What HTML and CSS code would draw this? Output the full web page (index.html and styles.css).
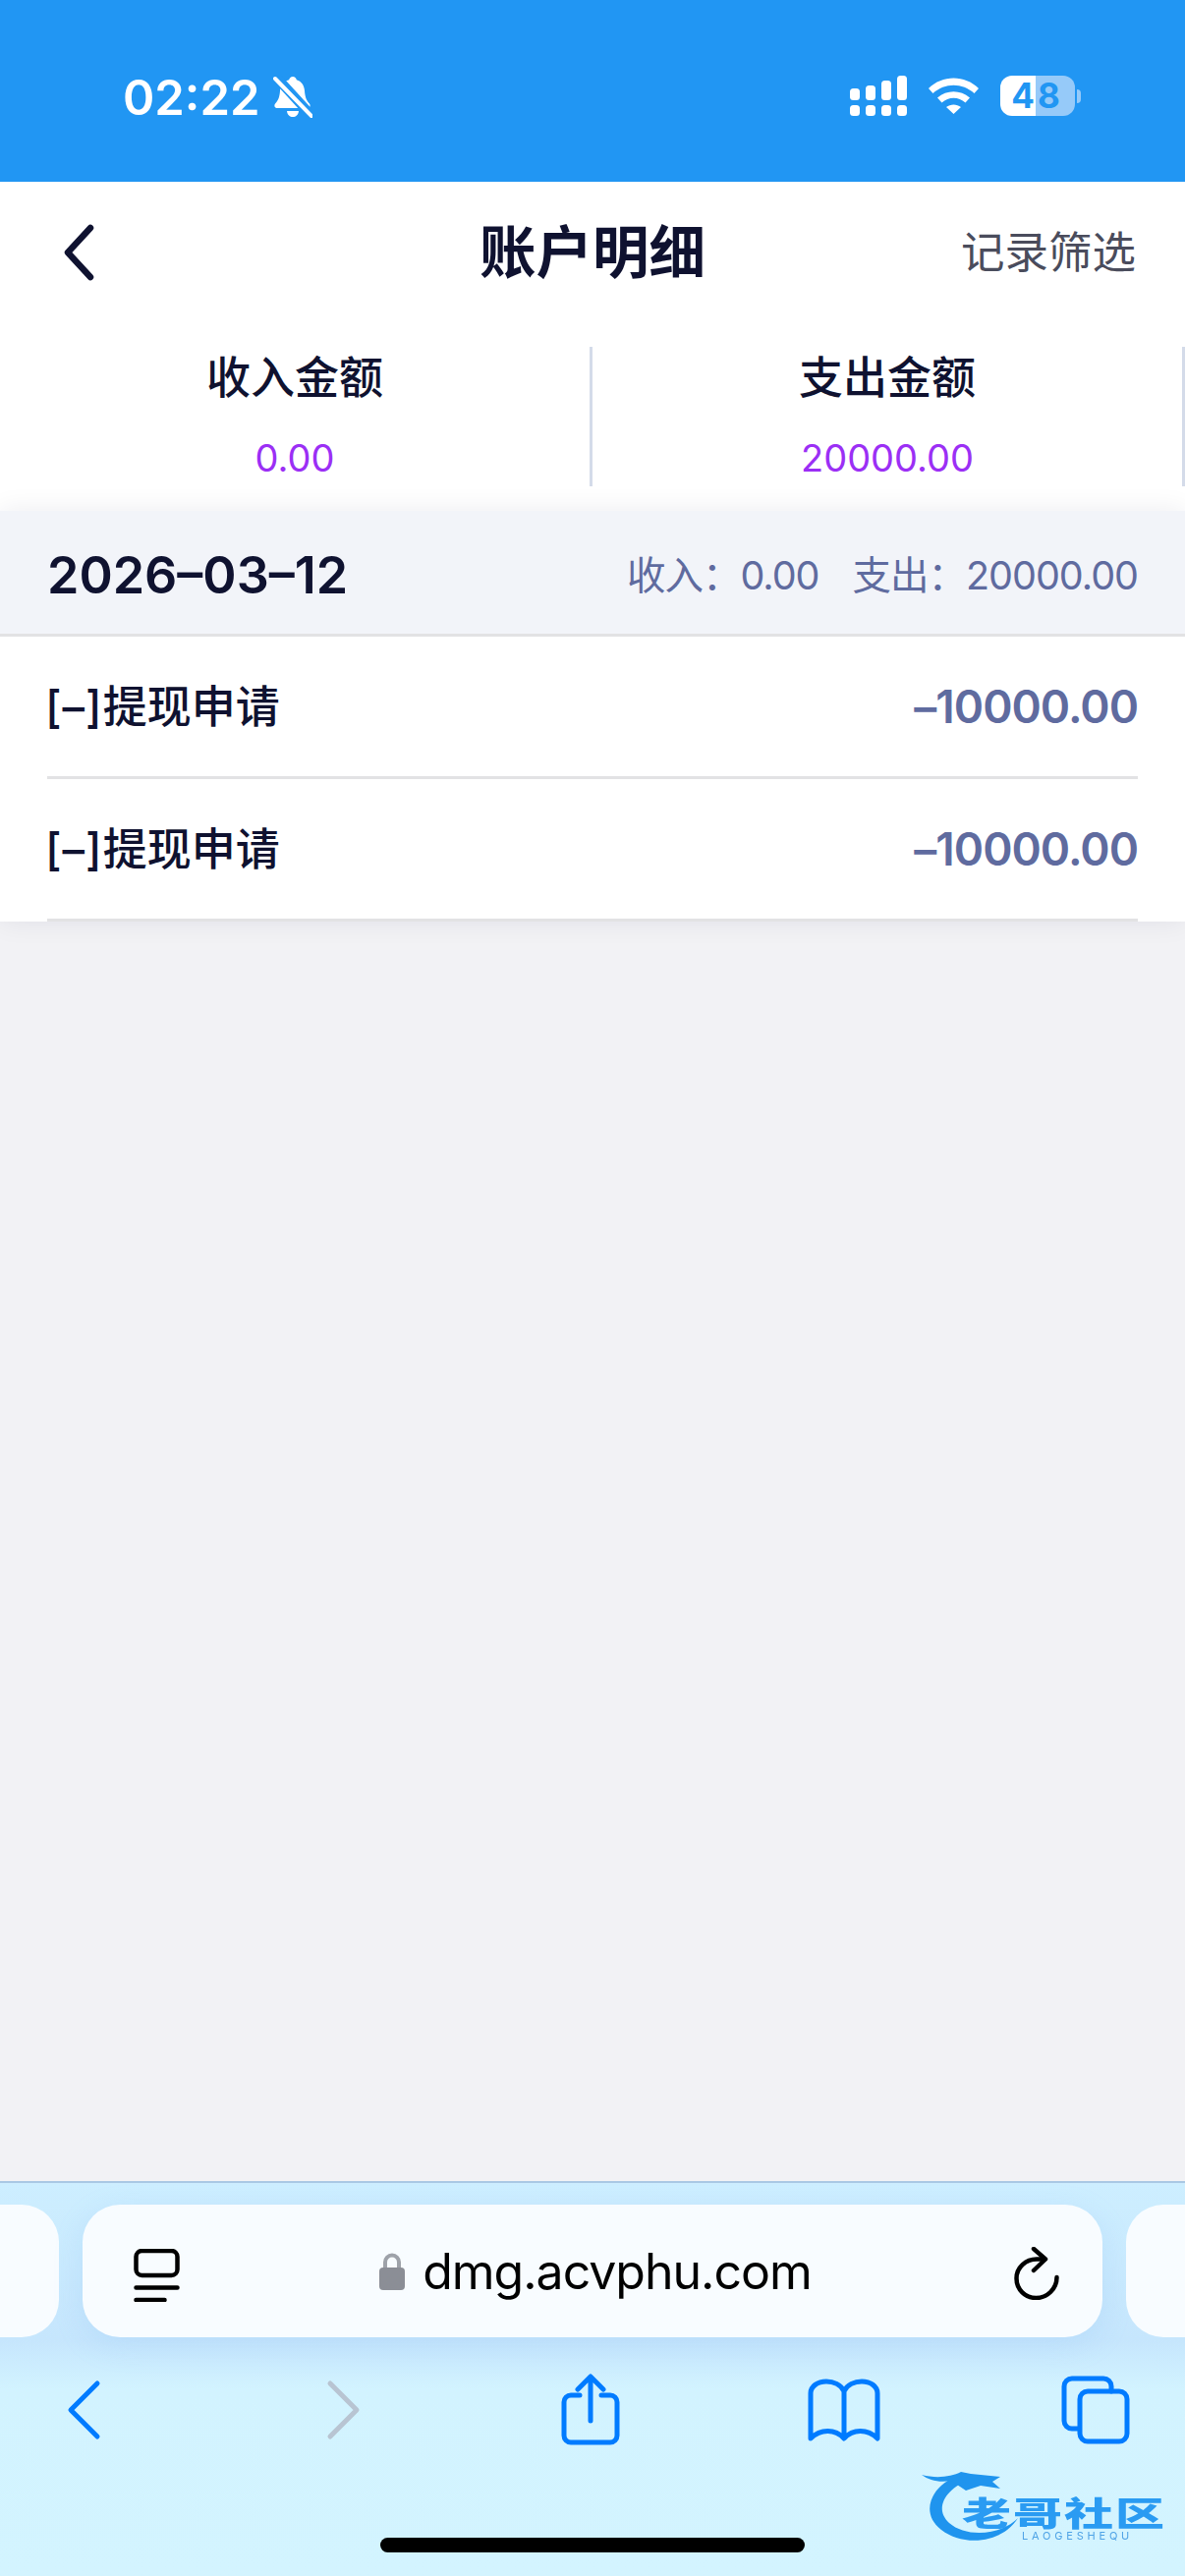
FILE: index.html
```html
<!DOCTYPE html>
<html lang="zh-CN">
<head>
<meta charset="utf-8">
<title>账户明细</title>
<link rel="stylesheet" href="styles.css">
</head>
<body>
<div class="screen">
  <header class="status">
    <div class="status-left">
      <span class="time">02:22</span>
      <svg class="bell" width="40" height="44" viewBox="0 0 40 44"><path class="w" d="M20 1c2 0 3.500 1.500 3.800 3.200 5 1.500 7.700 5.500 8.200 11 .4 6 1.500 9.500 4.700 13 1.800 2 .8 4.800-1.700 4.800H4c-2.500 0-3.500-2.800-1.700-4.800 3.200-3.500 4.300-7 4.700-13 .5-5.500 3.200-9.500 9.200-11C16.500 2.500 18 1 20 1Z"/><path class="w" d="M14 36h12c-.5 4-3 6-6 6s-5.500-2-6-6Z"/><path class="bg" d="M-2 -4 42 44"/><path class="ws" d="M2 3 39 41"/></svg>
    </div>
    <div class="status-right">
      <svg width="58" height="41" viewBox="0 0 58 41"><g class="w"><rect x="0" y="13" width="10" height="12" rx="3.500"/><rect x="16" y="10" width="10" height="15" rx="3.500"/><rect x="32" y="5" width="10" height="20" rx="3.500"/><rect x="48" y="0" width="10" height="25" rx="3.500"/><rect x="0" y="30" width="10" height="11" rx="3.500"/><rect x="16" y="30" width="10" height="11" rx="3.500"/><rect x="32" y="30" width="10" height="11" rx="3.500"/><rect x="48" y="30" width="10" height="11" rx="3.500"/></g></svg>
      <svg class="wifi" width="51" height="37" viewBox="0 0 51 37"><path class="w" d="M0 11C14-3 37-3 51 11l-4.500 5C34.500 5 16.500 5 4.500 16ZM9 20.500c9.500-8.500 23.500-8.500 33 0l-4.500 5c-7-6.500-17-6.500-24 0ZM18 30c4.500-3.500 10.500-3.500 15 0l-7.500 7Z"/></svg>
      <div class="battery">
        <div class="battery-body">
          <span class="battery-four">4</span><span class="battery-eight">8</span>
        </div>
        <span class="battery-nub"></span>
      </div>
    </div>
  </header>

  <nav class="nav">
    <svg class="nav-back" width="32" height="58" viewBox="0 0 32 58"><path d="M28 4 5 29l23 25"/></svg>
    <h1 class="nav-title">账户明细</h1>
    <span class="nav-filter">记录筛选</span>
  </nav>

  <section class="stats">
    <div class="stat">
      <span class="stat-label">收入金额</span>
      <span class="stat-value">0.00</span>
    </div>
    <div class="stat">
      <span class="stat-label">支出金额</span>
      <span class="stat-value">20000.00</span>
    </div>
  </section>

  <main class="content">
    <div class="card">
      <div class="date-row">
        <span class="date">2026–03–12</span>
        <div class="totals">
          <span>收入：0.00</span>
          <span>支出：20000.00</span>
        </div>
      </div>
      <div class="item">
        <span class="item-name"><span class="item-tag">[–]</span>提现申请</span>
        <span class="item-amount">–10000.00</span>
      </div>
      <div class="item">
        <span class="item-name"><span class="item-tag">[–]</span>提现申请</span>
        <span class="item-amount">–10000.00</span>
      </div>
    </div>
  </main>

  <footer class="browser">
    <div class="tabs">
      <div class="tab-peek tab-peek-left"></div>
      <div class="url-bar">
        <svg class="url-tab" width="47" height="54" viewBox="0 0 47 54"><rect class="ks" x="2.500" y="2" width="42" height="25" rx="6"/><path class="ks" d="M2.500 39.500h42M2.500 52h29"/></svg>
        <div class="url-center">
          <svg width="26" height="38" viewBox="0 0 26 38"><path class="lock-s" d="M6 17V9.500a7 7 0 0 1 14 0V17"/><rect class="lock" x="0" y="15" width="26" height="23" rx="4"/></svg>
          <span class="url-text">dmg.acvphu.com</span>
        </div>
        <svg class="url-reload" width="46" height="54" viewBox="0 0 46 54"><path class="ks" d="M31 12.500H23C12 12.500 2.500 21 2.500 32c0 11.500 9 20 20 20S43.500 43 43.500 31"/><path class="ks" d="M20 2 32 12.500 20 24"/></svg>
      </div>
      <div class="tab-peek tab-peek-right"></div>
    </div>
    <div class="toolbar">
      <svg class="tool tool-back" width="60" height="70" viewBox="0 0 60 70"><path class="bs" d="M44 8 17 35l27 27"/></svg>
      <svg class="tool tool-forward" width="60" height="70" viewBox="0 0 60 70"><path class="gs" d="M16 8l27 27-27 27"/></svg>
      <svg class="tool tool-share" width="62" height="74" viewBox="0 0 62 74"><path class="bs" d="M20 22h-9a7 7 0 0 0-7 7v34a7 7 0 0 0 7 7h40a7 7 0 0 0 7-7V29a7 7 0 0 0-7-7h-9M31 48V4M18 16 31 3l13 13"/></svg>
      <svg class="tool tool-book" width="76" height="64" viewBox="0 0 76 64"><path class="bs" d="M38 13C35 6 27 3 20 3 11 3 4 8 4 15v46c10-10 25-10 34 0 9-10 24-10 34 0V15c0-7-7-12-16-12-7 0-15 3-18 10ZM38 13v46"/></svg>
      <svg class="tool tool-tabs" width="70" height="70" viewBox="0 0 70 70"><path class="bs" d="M51 16v-5a8 8 0 0 0-8-8H11a8 8 0 0 0-8 8v35a8 8 0 0 0 8 8h7"/><rect class="bs" x="19" y="16" width="48" height="51" rx="8"/></svg>
    </div>
    <div class="home-bar"></div>
    <div class="watermark">
      <svg class="wm-dragon" width="112" height="80" viewBox="0 0 112 80"><path class="wm-fill" d="M30 10C10 20-2 45 20 62 40 78 80 78 98 50 80 68 45 70 28 55 14 42 22 26 38 16Z"/><path class="wm-fill" d="M0 6c15 4 30 2 40-3l10 2 30 3-8 5 8 7-20-3-15 5-15-10C18 14 8 12 0 6Z"/></svg>
      <span class="wm-text">老哥社区</span>
      <span class="wm-sub">LAOGESHEQU</span>
    </div>
  </footer>
</div>
</body>
</html>
```
FILE: styles.css
```css
* { box-sizing: border-box; }
html, body { margin: 0; padding: 0; }
body {
  font-family: Inter, "Noto Sans CJK SC", sans-serif;
  background: #f2f2f5;
  color: #0f1230;
}
.screen {
  width: 1206px;
  height: 2622px;
  display: flex;
  flex-direction: column;
  overflow: hidden;
}
.w { fill: #fff; }
.ws { fill: none; stroke: #fff; stroke-width: 4; stroke-linecap: round; }
.bg { fill: none; stroke: #2196f3; stroke-width: 10; }

/* Status bar */
.status {
  flex: 0 0 185px;
  background: #2196f3;
  display: flex;
  justify-content: space-between;
  align-items: flex-start;
  padding: 77px 106px 0 125px;
}
.status-left { display: flex; align-items: center; gap: 13px; }
.time { font-size: 49px; line-height: 43px; font-weight: 600; color: #fff; }
.status-right { display: flex; align-items: flex-start; }
.wifi { margin: 2px 22px 0 22px; }
.battery { display: flex; align-items: center; gap: 2px; }
.battery-body {
  width: 76px;
  height: 41px;
  border-radius: 12px;
  overflow: hidden;
  display: flex;
  font-size: 35px;
  font-weight: 700;
  line-height: 41px;
  color: #2196f3;
}
.battery-four { width: 36px; background: #fff; text-align: right; padding-right: 1px; }
.battery-eight { width: 40px; background: #96caf9; text-align: left; padding-left: 2px; }
.battery-nub {
  width: 4px;
  height: 14px;
  background: #96caf9;
  border-radius: 0 7px 7px 0;
}

/* Nav */
.nav {
  flex: 0 0 156px;
  background: #fff;
  display: grid;
  grid-template-columns: 1fr auto 1fr;
  align-items: center;
  padding: 0 50px 12px 64px;
}
.nav-back { fill: none; stroke: #0f1230; stroke-width: 6.500; stroke-linecap: round; stroke-linejoin: round; }
.nav-title {
  margin: 0 0 0 -14px;
  font-size: 57.500px;
  line-height: 70px;
  font-weight: 700;
  color: #0f1230;
}
.nav-filter {
  justify-self: end;
  font-size: 44.500px;
  line-height: 60px;
  color: #4a4c5c;
}

/* Stats */
.stats {
  flex: 0 0 179px;
  background: #fff;
  display: flex;
  padding: 12px 0 25px;
}
.stat {
  flex: 0 0 603px;
  border-right: 3px solid #d4dbe9;
  display: flex;
  flex-direction: column;
  align-items: center;
  padding-top: 2px;
}
.stat-label {
  font-size: 45px;
  line-height: 60px;
  font-weight: 500;
  color: #0f1230;
}
.stat-value {
  margin-top: 26px;
  font-size: 38px;
  line-height: 50px;
  color: #9b2ff5;
}

/* Records */
.content { flex: 1; }
.card {
  position: relative;
  background: #fff;
  box-shadow: 0 0 26px rgba(20, 30, 60, .08);
}
.date-row {
  height: 128px;
  background: #f2f4f9;
  border-bottom: 3px solid #e2e2e4;
  display: flex;
  justify-content: space-between;
  align-items: center;
  padding: 0 48px;
}
.date { font-size: 52px; font-weight: 600; color: #0f1230; padding-top: 5px; }
.totals {
  display: flex;
  gap: 34px;
  font-size: 39.500px;
  letter-spacing: -1px;
  color: #5f6b9f;
}
.item {
  height: 145px;
  margin: 0 48px;
  border-bottom: 3px solid #e2e2e4;
  display: flex;
  justify-content: space-between;
  align-items: center;
}
.item-name { font-size: 45px; font-weight: 500; color: #0f1230; margin-left: -2px; padding-bottom: 5px; }
.item-tag { letter-spacing: 1px; }
.item-amount { font-size: 46px; font-weight: 600; letter-spacing: -1px; color: #5f6b9f; }

/* Browser chrome */
.browser {
  flex: 0 0 402px;
  position: relative;
  border-top: 2px solid #a9c8e4;
  background: linear-gradient(#cdeeff 0, #c6e6fd 160px, #d2f3ff 210px, #d3f4ff 100%);
}
.tabs {
  display: flex;
  align-items: stretch;
  gap: 24px;
  height: 135px;
  margin: 22px -60px 0 -60px;
}
.tab-peek { flex: 0 0 120px; background: #f8fcff; border-radius: 38px; }
.url-bar {
  flex: 1;
  background: #f8fcff;
  border-radius: 38px;
  display: flex;
  align-items: center;
  justify-content: space-between;
  padding: 0 44px 0 52px;
  box-shadow: 0 8px 30px rgba(120, 180, 240, .18);
}
.url-tab { margin-top: 8px; }
.url-reload { margin-top: 4px; }
.ks { fill: none; stroke: #000; stroke-width: 4.500; stroke-linecap: round; stroke-linejoin: round; }
.url-center { display: flex; align-items: center; gap: 18px; margin-left: -3px; }
.lock { fill: #8b8e96; }
.lock-s { fill: none; stroke: #9ea2a9; stroke-width: 4; }
.url-text { font-size: 50px; line-height: 70px; color: #000; letter-spacing: -1px; font-family: Inter, sans-serif; }
.toolbar {
  display: flex;
  align-items: center;
  padding: 0 0 0 55px;
  margin-top: 37px;
  height: 74px;
}
.tool-forward { margin-left: 205px; }
.tool-share { margin-left: 190px; }
.tool-book { margin-left: 189px; }
.tool-tabs { margin-left: 183px; }
.bs { fill: none; stroke: #007bff; stroke-width: 5; stroke-linecap: round; stroke-linejoin: round; }
.gs { fill: none; stroke: #b8c4d2; stroke-width: 5; stroke-linecap: round; stroke-linejoin: round; }
.home-bar {
  position: absolute;
  left: 387px;
  top: 361px;
  width: 432px;
  height: 15px;
  border-radius: 8px;
  background: #000;
}
.watermark {
  position: absolute;
  left: 938px;
  top: 291px;
  width: 250px;
  height: 80px;
  filter: blur(.7px);
}
.wm-dragon { position: absolute; left: 0; top: 0; }
.wm-fill { fill: #1f94ee; }
.wm-text {
  position: absolute;
  left: 41px;
  top: 27px;
  font-family: "Noto Sans CJK SC", sans-serif;
  font-size: 50px;
  line-height: 32px;
  font-weight: 900;
  letter-spacing: 2px;
  color: #2a9bf2;
  white-space: nowrap;
  transform: scaleY(.68);
}
.wm-sub {
  position: absolute;
  left: 102px;
  top: 62px;
  font-size: 11px;
  line-height: 12px;
  letter-spacing: 3.800px;
  color: #4fa3e6;
  white-space: nowrap;
}
```
